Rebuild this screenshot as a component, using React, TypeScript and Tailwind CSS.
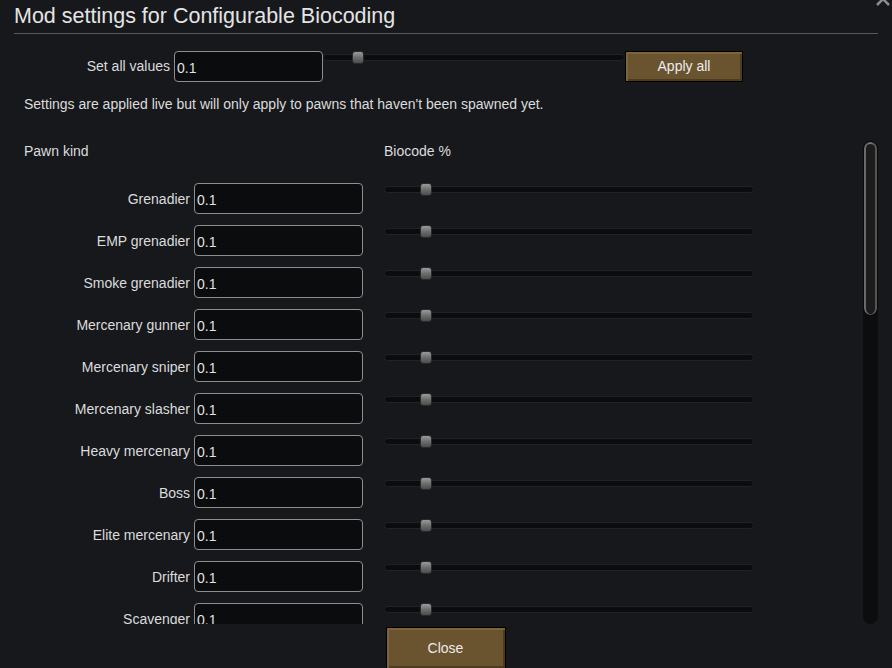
import { useState } from "react";

const pawnKinds = [
  "Grenadier",
  "EMP grenadier",
  "Smoke grenadier",
  "Mercenary gunner",
  "Mercenary sniper",
  "Mercenary slasher",
  "Heavy mercenary",
  "Boss",
  "Elite mercenary",
  "Drifter",
  "Scavenger",
  "Thrasher",
  "Pirate boss",
];

const Slider = ({ value, width }: { value: number; width: number }) => {
  // thumb is 12px wide, sits inside the track
  const left = value * (width - 12);
  return (
    <div className="relative h-[7px]" style={{ width }}>
      <div className="h-[7px] w-full rounded-full bg-[#0b0c0e] border border-[#1f2226]" />
      <div
        className="absolute top-[-3px] h-[13px] w-[12px] rounded-[3px] border border-[#2a2a2a] bg-gradient-to-b from-[#9a9a9a] via-[#6e6e6e] to-[#4c4c4c]"
        style={{ left }}
      />
    </div>
  );
};

const TextBox = ({ value, w }: { value: string; w: string }) => (
  <div
    className={`${w} h-[31px] rounded-[4px] border border-[#8e8e8e] bg-[#0b0c0e] pl-[2px] pt-[7px] text-[14px] leading-[18px] text-[#e2e2e2]`}
  >
    {value}
  </div>
);

const GameButton = ({ label, w }: { label: string; w: string }) => (
  <div
    className={`${w} border border-black bg-[#6a532f] shadow-[inset_2px_2px_0_#7d643a,inset_-2px_-2px_0_#4e3c20] flex items-center justify-center text-[14px] text-[#ececec]`}
  >
    {label}
  </div>
);

export default function App() {
  const [all] = useState(0.1);

  return (
    <div className="relative h-[668px] w-[892px] overflow-hidden bg-[#16181c] font-['Liberation_Sans',Arial,sans-serif] text-[#dcdcdc]">
      <svg className="absolute right-[1px] top-[-9px]" width="16" height="16" viewBox="0 0 16 16">
        <path d="M2 2 L14 14 M14 2 L2 14" stroke="#8d8d8d" strokeWidth="2.5" />
      </svg>

      <div className="px-[14px] pt-[3px]">
        <h1 className="text-[21.5px] leading-[27px] text-[#e4e4e4]">Mod settings for Configurable Biocoding</h1>
        <div className="mt-[3px] h-px w-[864px] bg-[#56585c]" />
      </div>

      <div className="mt-[17px] flex h-[31px] items-center">
        <div className="w-[174px] pr-[4px] text-right text-[14px]">Set all values</div>
        <TextBox value={String(all)} w="w-[149px]" />
        <div className="self-start pt-[3px]">
          <Slider value={all} width={302} />
        </div>
        <GameButton label="Apply all" w="w-[118px] h-[31px]" />
      </div>

      <p className="mt-[13px] pl-[24px] text-[14px] leading-[18px]">
        Settings are applied live but will only apply to pawns that haven't been spawned yet.
      </p>

      <div className="mt-[27px] flex h-[484px] pr-[14px]">
        <div className="flex-1 overflow-hidden">
          <div className="flex pt-[2px] text-[14px] leading-[18px]">
            <div className="w-[384px] pl-[24px]">Pawn kind</div>
            <div>Biocode %</div>
          </div>
          <div className="mt-[23px] flex flex-col gap-[11px]">
            {pawnKinds.map((name) => (
              <div key={name} className="flex h-[31px]">
                <div className="w-[194px] pr-[4px] pt-[7px] text-right text-[14px] leading-[18px]">{name}</div>
                <TextBox value="0.1" w="w-[169px]" />
                <div className="ml-[21px] pt-[3px]">
                  <Slider value={0.1} width={370} />
                </div>
              </div>
            ))}
          </div>
        </div>
        <div className="relative mt-[1px] h-[483px] w-[15px] rounded-full bg-[#0c0d0f]">
          <div className="h-[175px] w-[15px] rounded-full border border-[#0a0a0a] bg-[#1c1c1c] shadow-[inset_2px_0_0_#6a6a6a,inset_-2px_0_0_#555,inset_0_2px_0_#777]" />
        </div>
      </div>

      <div className="mt-[3px] flex justify-center pr-[1px]">
        <GameButton label="Close" w="w-[120px] h-[42px]" />
      </div>
    </div>
  );
}
